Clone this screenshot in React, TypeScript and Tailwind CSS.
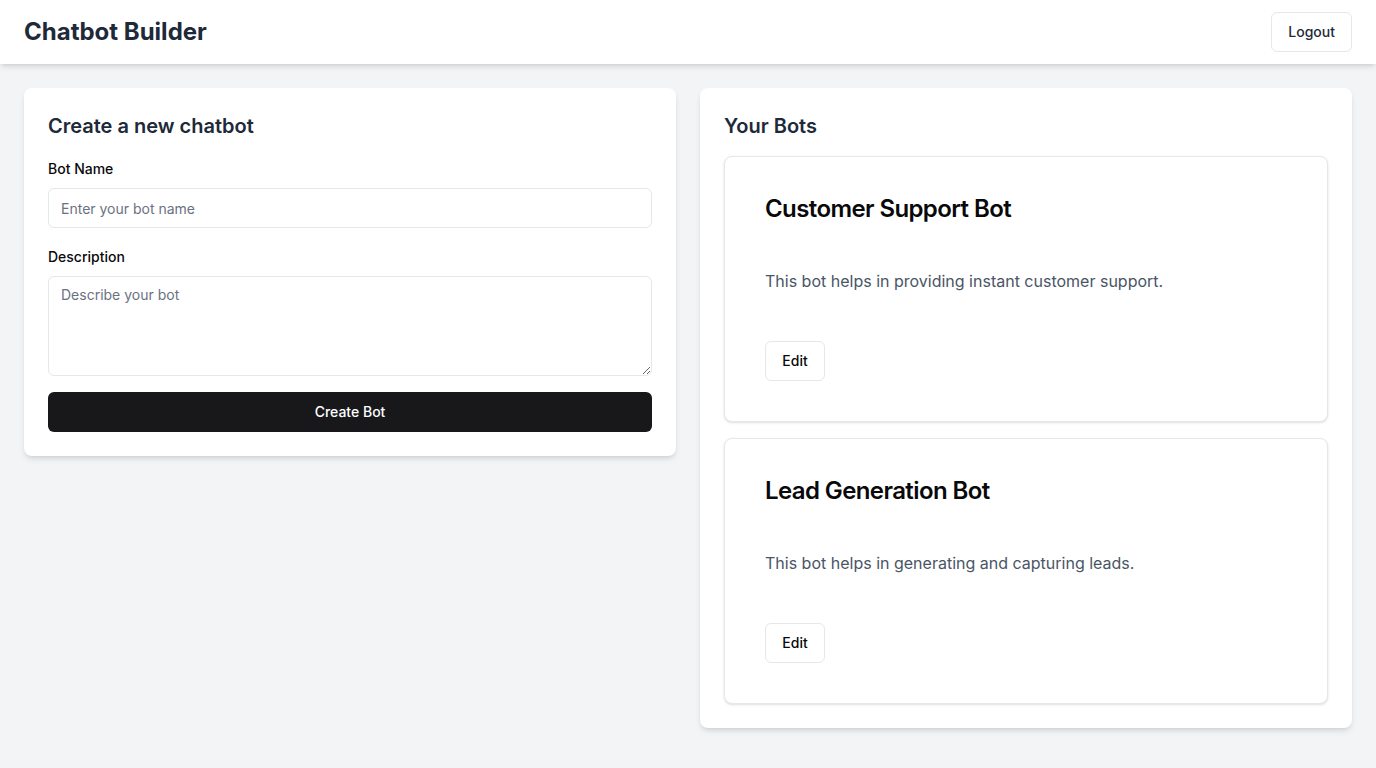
const bots = [
  {
    name: 'Customer Support Bot',
    description: 'This bot helps in providing instant customer support.',
  },
  {
    name: 'Lead Generation Bot',
    description: 'This bot helps in generating and capturing leads.',
  },
]

const App = () => {
  return (
    <div className="min-h-screen bg-gray-100 font-['Inter',sans-serif]">
      <header className="h-16 bg-white shadow-md px-6 flex items-center justify-between">
        <h1 className="text-2xl font-bold text-gray-800">Chatbot Builder</h1>
        <button className="h-10 px-4 rounded-md border border-gray-200 bg-white text-sm font-medium text-gray-800">
          Logout
        </button>
      </header>

      <main className="p-6 grid grid-cols-2 gap-6 items-start">
        <div className="bg-white rounded-lg shadow-md p-6">
          <h2 className="text-xl font-semibold text-gray-800 mb-[19px]">Create a new chatbot</h2>

          <label className="block text-sm font-medium leading-5 text-[#09090b] mb-[9px]">Bot Name</label>
          <input
            type="text"
            placeholder="Enter your bot name"
            className="w-full h-10 px-3 rounded-md border border-gray-200 text-sm placeholder:text-gray-500 outline-none mb-[19px]"
          />

          <label className="block text-sm font-medium leading-5 text-[#09090b] mb-[9px]">Description</label>
          <textarea
            placeholder="Describe your bot"
            className="block w-full h-[100px] px-3 py-2 rounded-md border border-gray-200 text-sm placeholder:text-gray-500 outline-none mb-4"
          />

          <button className="w-full h-10 rounded-md bg-[#18181b] text-white text-sm font-medium">
            Create Bot
          </button>
        </div>

        <div className="bg-white rounded-lg shadow-md p-6">
          <h2 className="text-xl font-semibold text-gray-800 mb-4">Your Bots</h2>
          <div className="flex flex-col gap-4">
            {bots.map((bot) => (
              <div key={bot.name} className="rounded-lg border border-gray-200 bg-white shadow-sm p-10">
                <h3 className="text-2xl font-semibold leading-none tracking-tight text-[#09090b]">{bot.name}</h3>
                <p className="mt-12 text-base leading-6 text-gray-600">{bot.description}</p>
                <button className="mt-12 h-10 w-[60px] rounded-md border border-gray-200 bg-white text-sm font-medium text-[#09090b]">
                  Edit
                </button>
              </div>
            ))}
          </div>
        </div>
      </main>
    </div>
  )
}

export default App
